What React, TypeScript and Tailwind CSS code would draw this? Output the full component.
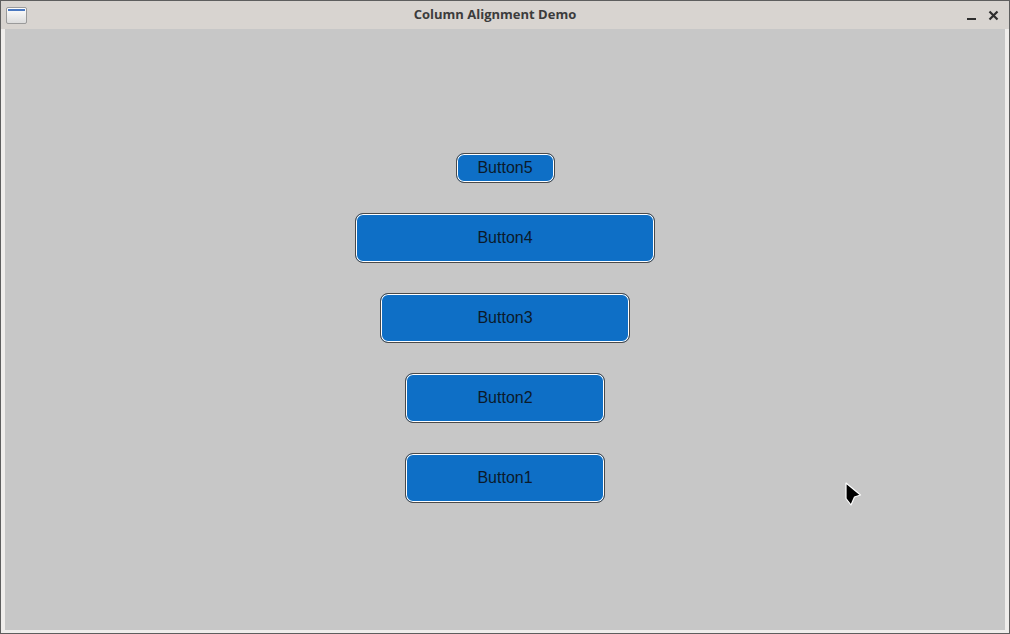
import React from "react";

function Btn({ label, w, h }: { label: string; w: string; h: string }) {
  return (
    <div
      className={`${w} ${h} rounded-[8px] border border-[#4a4a4a] bg-[#0e6fc6] shadow-[inset_0_0_0_1px_#ffffff] flex items-center justify-center text-[16px] text-[#0b1a2b]`}
      style={{ fontFamily: '"Liberation Sans", Arial, sans-serif' }}
    >
      {label}
    </div>
  );
}

export default function App() {
  return (
    <div className="w-[1010px] h-[634px] bg-[#5e5e5e] p-px flex flex-col relative overflow-hidden">
      {/* title bar */}
      <div className="h-[28px] bg-[#d8d4d0] flex items-center relative shrink-0">
        <div className="ml-[5px] w-[21px] h-[17px] rounded-[2px] border border-[#9a9a9a] bg-gradient-to-b from-white to-[#dcdcdc] flex flex-col">
          <div className="h-[2px] mt-[1px] mx-px bg-[#4a78c0]" />
        </div>
        <div
          className="absolute left-0 right-[20px] top-0 h-full flex items-center justify-center text-[13px] font-bold text-[#3c3c3c]"
          style={{ fontFamily: '"Open Sans", "DejaVu Sans", sans-serif' }}
        >
          Column Alignment Demo
        </div>
        <div className="ml-auto mr-[10px] flex items-center gap-[12px] relative">
          <div className="w-[9px] h-[2px] bg-[#2e2e2e] mt-[8px]" />
          <svg width="11" height="11" viewBox="0 0 11 11">
            <path d="M1.5 1.5 L9.5 9.5 M9.5 1.5 L1.5 9.5" stroke="#2e2e2e" strokeWidth="2.2" />
          </svg>
        </div>
      </div>
      {/* body with light frame */}
      <div className="flex-1 bg-[#efedeb] px-[4px] pb-[3px] flex">
        <div className="flex-1 bg-[#c7c7c7] flex flex-col items-center pt-[124px] gap-[30px]">
          <Btn label="Button5" w="w-[99px]" h="h-[30px]" />
          <Btn label="Button4" w="w-[300px]" h="h-[50px]" />
          <Btn label="Button3" w="w-[250px]" h="h-[50px]" />
          <Btn label="Button2" w="w-[200px]" h="h-[50px]" />
          <Btn label="Button1" w="w-[200px]" h="h-[50px]" />
        </div>
      </div>
      {/* mouse cursor */}
      <svg className="absolute left-[844px] top-[481px]" width="20" height="26" viewBox="0 0 20 26">
        <path d="M2 2 L16.5 14 L10.5 16 L7 24 L2 17.5 Z" fill="#000" stroke="#fff" strokeWidth="1.2" strokeLinejoin="round" />
      </svg>
    </div>
  );
}
